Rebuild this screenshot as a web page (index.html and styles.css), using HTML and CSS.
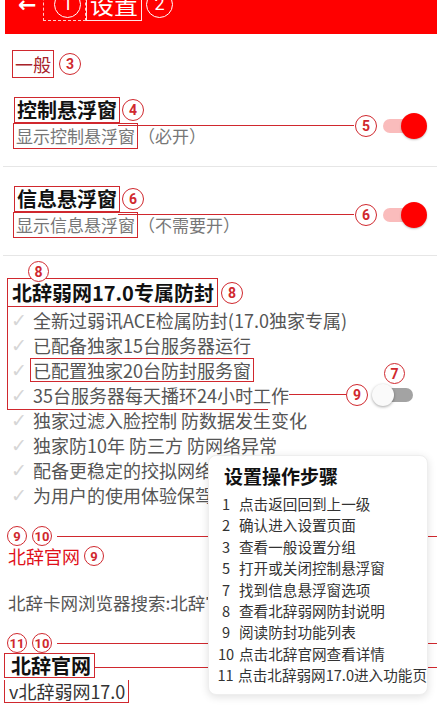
FILE: index.html
```html
<!DOCTYPE html>
<html lang="zh-CN">
<head>
    <meta charset="UTF-8">
    <meta name="viewport" content="width=device-width, initial-scale=1.0">
    <title>设置</title>
    <link rel="stylesheet" href="styles.css">
</head>
<body>
    <div class="screen">
        <header class="topbar">
            <div class="topbar-inner">
                <span class="back">←</span>
                <span class="dash-box"><span class="mark mark-white">1</span></span>
                <span class="title-box">设置</span>
                <span class="mark mark-white">2</span>
            </div>
        </header>

        <div class="group-label"><span class="box">一般</span><span class="mark">3</span></div>

        <div class="pref">
            <div class="pref-text">
                <div class="pref-title"><span class="box">控制悬浮窗</span><span class="mark">4</span></div>
                <div class="pref-sub"><span class="box">显示控制悬浮窗</span>（必开）</div>
            </div>
            <div class="pref-side">
                <span class="mark">5</span>
                <span class="switch on"><span class="track"></span><span class="knob"></span></span>
            </div>
            <span class="leader"></span>
        </div>

        <div class="pref">
            <div class="pref-text">
                <div class="pref-title"><span class="box">信息悬浮窗</span><span class="mark">6</span></div>
                <div class="pref-sub"><span class="box">显示信息悬浮窗</span>（不需要开）</div>
            </div>
            <div class="pref-side">
                <span class="mark">6</span>
                <span class="switch on"><span class="track"></span><span class="knob"></span></span>
            </div>
            <span class="leader"></span>
        </div>

        <div class="guard">
            <span class="mark mark-top">8</span>
            <span class="bracket"></span>
            <div class="guard-title"><span class="box">北辞弱网17.0专属防封</span><span class="mark">8</span></div>
            <ul class="checks">
                <li><span class="tick">✓</span>全新过弱讯ACE检属防封(17.0独家专属)</li>
                <li><span class="tick">✓</span>已配备独家15台服务器运行</li>
                <li><span class="tick">✓</span><span class="box">已配置独家20台防封服务窗</span></li>
                <li class="with-switch">
                    <span class="tick">✓</span>35台服务器每天播环24小时工作<span class="line"></span><span class="mark">9</span>
                    <span class="switch off"><span class="track"></span><span class="knob"></span></span>
                    <span class="mark mark-float">7</span>
                </li>
                <li><span class="tick">✓</span>独家过滤入脸控制 防数据发生变化</li>
                <li><span class="tick">✓</span>独家防10年 防三方 防网络异常</li>
                <li><span class="tick">✓</span>配备更稳定的挍拟网络技术</li>
                <li><span class="tick">✓</span>为用户的使用体验保驾护航</li>
            </ul>
        </div>

        <div class="note-row"><span class="mark mark-sm">9</span><span class="mark mark-sm">10</span><span class="line"></span></div>
        <div class="site-link">北辞官网<span class="mark mark-sm">9</span></div>

        <p class="search-tip">北辞卡网浏览器搜索:北辞官网</p>

        <div class="note-row"><span class="mark mark-sm">11</span><span class="mark mark-sm">10</span><span class="line"></span></div>
        <div class="site-name"><span class="box">北辞官网</span><span class="line"></span></div>
        <div class="site-ver"><span class="box">v北辞弱网17.0</span></div>

        <div class="steps">
            <h2>设置操作步骤</h2>
            <ol>
                <li><span class="num">1</span>点击返回回到上一级</li>
                <li><span class="num">2</span>确认进入设置页面</li>
                <li><span class="num">3</span>查看一般设置分组</li>
                <li><span class="num">5</span>打开或关闭控制悬浮窗</li>
                <li><span class="num">7</span>找到信息悬浮窗选项</li>
                <li><span class="num">8</span>查看北辞弱网防封说明</li>
                <li><span class="num">9</span>阅读防封功能列表</li>
                <li><span class="num">10</span>点击北辞官网查看详情</li>
                <li><span class="num">11</span>点击北辞弱网17.0进入功能页</li>
            </ol>
        </div>
    </div>
</body>
</html>
```

FILE: styles.css
```css
body {
    margin: 0;
    background-color: #fff;
    font-family: "Noto Sans CJK SC", "Roboto", sans-serif;
    color: #222;
}
.screen {
    position: relative;
    width: 437px;
    height: 718px;
    overflow: hidden;
}

/* annotation marks */
.box {
    display: inline-block;
    border: 1px solid #d0282e;
    padding: 0 2px;
}
.mark {
    display: inline-flex;
    align-items: center;
    justify-content: center;
    box-sizing: border-box;
    width: 22px;
    height: 22px;
    border: 1.5px solid #d0282e;
    border-radius: 50%;
    background-color: #fff;
    color: #d0282e;
    font-family: "Roboto", sans-serif;
    font-size: 14px;
    font-weight: bold;
    line-height: 1;
}
.mark-sm {
    width: 20px;
    height: 20px;
    font-size: 13px;
}
.mark-white {
    width: 27px;
    height: 27px;
    border-color: #fff;
    background-color: transparent;
    color: #fff;
    font-size: 18px;
    font-weight: normal;
}
.line {
    flex: 1;
    height: 0;
    border-top: 1px solid #d0282e;
}

/* top bar */
.topbar {
    margin-left: 5px;
    height: 34px;
    background-color: #ff0000;
    overflow: hidden;
}
.topbar-inner {
    display: flex;
    align-items: center;
    height: 34px;
    margin-top: -13px;
    padding-left: 13px;
}
.back {
    width: 22px;
    color: #fff;
    font-family: "DejaVu Sans", sans-serif;
    font-size: 22px;
    font-weight: bold;
}
.dash-box {
    display: flex;
    align-items: center;
    height: 32px;
    margin-left: 3px;
    padding: 0 4px 0 6px;
    border: 1px dashed rgba(255, 255, 255, 0.8);
}
.title-box {
    height: 32px;
    padding: 0 3px;
    border: 1px solid rgba(255, 255, 255, 0.9);
    color: #fff;
    font-size: 24px;
    line-height: 32px;
}
.topbar-inner .mark-white:last-child {
    margin-left: 4px;
}

/* general group */
.group-label {
    display: flex;
    align-items: center;
    gap: 5px;
    margin-top: 16px;
    padding-left: 12px;
    color: #a8232a;
    font-size: 18px;
    line-height: 26px;
}

/* preference rows */
.pref {
    position: relative;
    display: flex;
    align-items: center;
    padding: 19px 10px 17px 11px;
    border-bottom: 1px solid #e6e6e6;
    margin-left: 3px;
}
.pref-text {
    flex: 1;
}
.pref-title {
    display: flex;
    align-items: center;
    gap: 2px;
    font-size: 20px;
    font-weight: bold;
    color: #111;
    line-height: 24px;
}
.pref-sub {
    margin-left: -1px;
    font-size: 17px;
    color: #777;
    line-height: 24px;
}
.pref-side {
    display: flex;
    align-items: center;
    gap: 6px;
    margin-top: 6px;
}
.leader {
    position: absolute;
    left: 115px;
    right: 83px;
    top: 47px;
    border-top: 1px solid #d0282e;
}

/* switches */
.switch {
    position: relative;
    display: inline-block;
    width: 44px;
    height: 26px;
}
.switch .track {
    position: absolute;
    left: 0;
    top: 6px;
    width: 37px;
    height: 14px;
    border-radius: 7px;
    background-color: #fabcbc;
}
.switch .knob {
    position: absolute;
    right: 0;
    top: 0;
    width: 26px;
    height: 26px;
    border-radius: 50%;
    background-color: #ff0000;
    box-shadow: 0 1px 2px rgba(0, 0, 0, 0.25);
}
.switch.off {
    width: 41px;
    height: 22px;
}
.switch.off .track {
    left: 8px;
    top: 4px;
    width: 33px;
    background-color: #a3a3a3;
}
.switch.off .knob {
    left: 0;
    right: auto;
    width: 22px;
    height: 22px;
    background-color: #fafafa;
    box-shadow: 0 1px 3px rgba(0, 0, 0, 0.35);
}

/* anti-ban section */
.guard {
    position: relative;
    padding-top: 22px;
}
.mark-top {
    position: absolute;
    left: 28px;
    top: 5px;
    width: 21px;
    height: 21px;
}
.bracket {
    position: absolute;
    left: 7px;
    top: 22px;
    width: 260px;
    height: 131px;
    border-left: 1px solid #d0282e;
    border-bottom: 1px solid #d0282e;
}
.guard-title {
    display: flex;
    align-items: center;
    gap: 3px;
    padding-left: 7px;
    font-size: 20px;
    font-weight: bold;
    color: #111;
}
.guard-title .box {
    line-height: 27px;
    padding: 0 3px 0 4px;
}
.checks {
    list-style: none;
    margin: 0;
    padding: 0 0 0 11px;
    font-size: 18px;
    color: #555;
}
.checks li {
    display: flex;
    align-items: center;
    height: 25px;
    white-space: nowrap;
}
.checks .box {
    line-height: 22px;
    margin-left: -3px;
    padding: 0 2px;
}
.tick {
    width: 22px;
    color: #d6d6d6;
    font-family: "DejaVu Sans", sans-serif;
    font-size: 19px;
}
.with-switch {
    position: relative;
    padding-right: 24px;
}
.with-switch .switch {
    margin-left: 4px;
}
.mark-float {
    position: absolute;
    right: 32px;
    top: -19px;
    width: 21px;
    height: 21px;
}

/* links */
.note-row {
    display: flex;
    align-items: center;
    gap: 5px;
    margin-top: 19px;
    padding-left: 7px;
}
.site-link {
    display: flex;
    align-items: center;
    gap: 4px;
    padding-left: 8px;
    color: #e0101a;
    font-size: 18px;
    line-height: 20px;
}
.search-tip {
    margin: 26px 0 0;
    padding-left: 8px;
    color: #555;
    font-size: 17.5px;
    line-height: 22px;
    white-space: nowrap;
}
.site-name {
    display: flex;
    align-items: center;
    padding-left: 4px;
    font-size: 20px;
    font-weight: bold;
    color: #111;
}
.site-name .box {
    line-height: 23px;
    padding: 0 3px 0 6px;
}
.site-name .line {
    margin-top: 4px;
}
.site-ver {
    padding-left: 4px;
    font-size: 18px;
    color: #333;
}
.site-ver .box {
    line-height: 22px;
    border-top: none;
    padding: 0 3px 0 4px;
}

/* steps popup */
.steps {
    position: absolute;
    left: 208px;
    top: 455px;
    box-sizing: border-box;
    width: 220px;
    height: 240px;
    padding: 7px 0 0 8px;
    background-color: #fff;
    border: 1px solid #eee;
    border-radius: 8px;
    box-shadow: 0 2px 8px rgba(0, 0, 0, 0.12);
}
.steps h2 {
    margin: 0 0 4px 7px;
    font-size: 19px;
    line-height: 26px;
    color: #111;
}
.steps ol {
    list-style: none;
    margin: 0;
    padding: 0;
    font-size: 14.6px;
    color: #333;
}
.steps li {
    display: flex;
    height: 21.4px;
    line-height: 21.4px;
    white-space: nowrap;
}
.steps .num {
    width: 18px;
    margin-right: 4px;
    text-align: center;
}
```
